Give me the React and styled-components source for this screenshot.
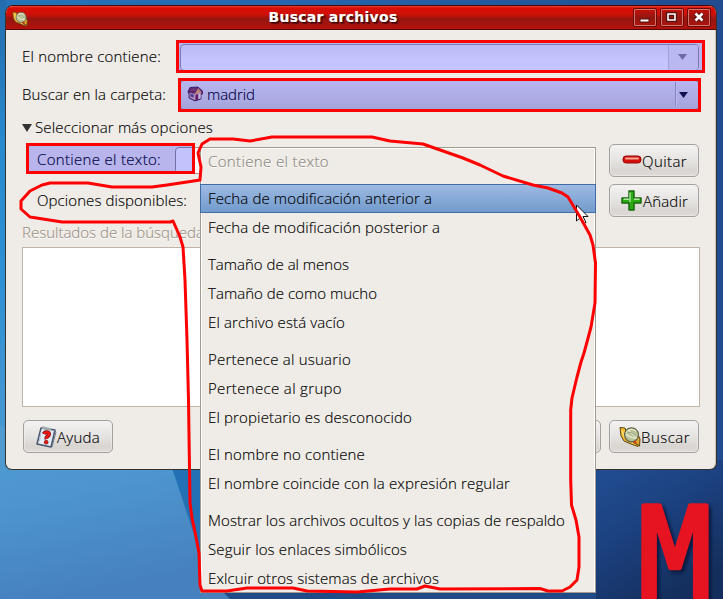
import React, { useLayoutEffect, useRef } from "react";
import styled, { createGlobalStyle } from "styled-components";

const Global = createGlobalStyle`
  * { box-sizing: border-box; }
  body { margin: 0; overflow: hidden; font-family: "Open Sans", "Noto Sans", sans-serif; font-weight: 300; font-size: 15px; color: #000; }
`;

const Desktop = styled.main`
  position: relative;
  width: 723px;
  height: 599px;
  padding: 5px 6px 0 5px;
  overflow: hidden;
  background: #1d4585;
`;

const Wallpaper = styled.svg`
  position: absolute;
  inset: 0;
`;

const LogoLetter = styled.text`
  font: 400 132px "DejaVu Sans Mono", monospace;
  fill: #e51420;
  stroke: #e51420;
  stroke-width: 5px;
  stroke-linejoin: round;
  filter: drop-shadow(3px 3px 2px #0a1a40);
`;

const Window = styled.section`
  position: relative;
  width: 712px;
  height: 465px;
  border: 1px solid #35332f;
  border-top-color: #4a0907;
  border-radius: 8px 8px 7px 7px;
  background: #efece7;
  overflow: hidden;
  box-shadow: inset -1px 0 #c9c2b9;
`;

const TitleBar = styled.header`
  display: grid;
  grid-template-columns: 84px 1fr 84px;
  align-items: center;
  height: 24px;
  background: linear-gradient(#e4433a 0, #d90d05 2px, #d01008 8px, #961610 13px, #ab130c 20px, #b5110b 23px);
  border-bottom: 1px solid #500b08;
`;

const TitleIcon = styled.div`
  height: 18px;
  padding-left: 6px;
  padding-top: 2px;
`;

const Title = styled.h1`
  margin: -2px 0 0;
  justify-self: center;
  font: bold 14px/20px "DejaVu Sans", sans-serif;
  color: #fff;
  text-shadow: 1px 1px 1px #300, 2px 2px 1px #3008;
  padding-right: 56px;
`;

const WindowControls = styled.div`
  display: flex;
  justify-self: end;
  gap: 3px;
  padding-right: 5px;
  margin-top: -1px;
`;

const ControlButton = styled.button`
  display: block;
  width: 24px;
  height: 19px;
  padding: 0;
  border: 1px solid #6b0b07;
  border-radius: 2px;
  background: linear-gradient(#c91009, #921711 50%, #ad130c);
  box-shadow: inset 0 0 0 1px #d4746d;
  svg { display: block; }
`;

const Body = styled.div`
  display: flex;
  flex-direction: column;
  padding: 8px 15px 0 16px;
`;

const Row = styled.div`
  display: flex;
  align-items: center;
  flex: none;
  height: ${(p) => p.$h}px;
  padding-left: ${(p) => p.$indent || 0}px;
`;

const LabelCell = styled.div`
  width: ${(p) => p.$w}px;
  flex: none;
  padding-bottom: 2px;
`;

const Words = styled.span`
  display: inline-block;
  white-space: pre;
  line-height: 20px;
  -webkit-text-stroke: 0.15px currentColor;
`;

const EntryCombo = styled.div`
  display: flex;
  width: 519px;
  height: 27px;
  border: 1px solid #a29f9c;
  border-radius: 4px;
  background: linear-gradient(#f2f2f2, #fff 60%);
  overflow: hidden;
`;

const EntryArrow = styled.div`
  display: grid;
  place-items: center;
  width: 30px;
  padding-right: 2px;
  margin-left: auto;
  border-left: 1px solid #d5d2ce;
  background: #f2f0ed;
`;

const FolderButton = styled.div`
  display: flex;
  align-items: center;
  width: 519px;
  height: 30px;
  padding: 0 0 2px 6px;
  border: 1px solid #aaa7a2;
  border-radius: 4px;
  background: linear-gradient(#efeeec, #d8d5d1);
  gap: 4px;
`;

const FolderArrow = styled.div`
  display: flex;
  align-items: center;
  width: 23px;
  height: 24px;
  padding: 2px 0 0 3px;
  margin-left: auto;
  border-left: 1px solid #b0acab;
  box-shadow: inset 1px 0 #f4f2f0;
`;

const TextEntry = styled.div`
  width: 420px;
  height: 27px;
  border: 1px solid #9a958e;
  border-radius: 4px;
  background: #fdfdfc;
`;

const Button = styled.button`
  display: flex;
  align-items: center;
  justify-content: flex-start;
  width: 90px;
  height: 33px;
  flex: none;
  margin: 0 0 0 ${(p) => p.$push || "0"};
  padding: 0 0 0 ${(p) => p.$pad || 0}px;
  border: 1px solid #a3a19e;
  border-radius: 5px;
  background: linear-gradient(#f4f3f2, #e6e4e2 48%, #d9d6d2 80%, #dedbd7);
  box-shadow: inset 0 0 0 1px #f3f1ef80;
  font: inherit;
  color: inherit;
  svg { flex: none; }
`;

const ButtonText = styled.span`
  display: block;
  padding-top: 1px;
`;

const Muted = styled.div`
  height: 24px;
  padding-top: 1px;
  color: #9b8f83;
  text-shadow: 0 1px #fff;
`;

const ResultList = styled.div`
  height: 160px;
  margin: 2px 0 13px;
  width: 678px;
  border: 1px solid #c0b4a9;
  background: #fff;
`;

const Footer = styled.footer`
  display: flex;
  padding: 0 1px;
`;

const Menu = styled.ul`
  position: absolute;
  left: 200px;
  top: 147px;
  width: 396px;
  height: 446px;
  margin: 0;
  padding: 0;
  list-style: none;
  border: 1px solid #a39a8d;
  box-shadow: inset 1px 1px #fff, inset -1px 0 #fff;
  background: #efece7;
`;

const MenuItem = styled.li`
  height: 29px;
  margin: ${(p) => (p.$gap ? "8px" : "0")} -1px 0;
  padding: 3px 0 0 7px;
  border: 1px solid ${(p) => (p.$selected ? "#416ba5" : "transparent")};
  background: ${(p) => (p.$selected ? "linear-gradient(#9dbae2, #739bcd)" : "none")};
  color: ${(p) => (p.$disabled ? "#8b8781" : "#000")};
  text-shadow: ${(p) => (p.$disabled ? "0 1px #fff" : "none")};
  &:first-child { height: 28px; padding-top: 2px; }
`;

const Overlay = styled.svg`
  position: absolute;
  inset: 0;
  pointer-events: none;
`;

/* Text tracked so that it fills the given width. */
function Label({ w, children }) {
  const ref = useRef(null);
  useLayoutEffect(() => {
    const el = ref.current;
    el.style.letterSpacing = "0px";
    const natural = el.getBoundingClientRect().width;
    el.style.letterSpacing = `${(w - natural) / children.length}px`;
  }, [w, children]);
  return <Words ref={ref}>{children}</Words>;
}

const Triangle = ({ color, width = 9, height = 6 }) => (
  <svg width={width} height={height} viewBox="0 0 9 6" preserveAspectRatio="none">
    <path d="M0 0H9L4.5 6Z" fill={color} />
  </svg>
);

const Lens = ({ size }) => (
  <svg width={size} height={size} viewBox="0 0 22 22">
    <path d="M1 1.5L6 2L8 8L12 15L20 19.5L19 20.5L12 18L5 15L2 10Z" fill="#f3bd2f" stroke="#5e4617" strokeWidth="1" />
    <path d="M18 6L21 13L20.5 20L16 17Z" fill="#dea92b" stroke="#5e4617" strokeWidth="1" />
    <path d="M3 5L6 12L14 17" stroke="#fff09a" fill="none" />
    <circle cx="12.5" cy="8.8" r="7" fill="#b9c296" stroke="#656448" strokeWidth="1.2" />
    <path d="M7 7Q11 1 17 5M7 8Q13 13 18 12M9 4L17 11" fill="none" stroke="#e9edcf" strokeWidth="1.2" />
    <path d="M8 6Q12 5 17 10" fill="none" stroke="#7b8b71" strokeWidth=".7" />
    <path d="M14 16L17 14.5L17.5 18Z" fill="#e53818" />
  </svg>
);

const Home = () => (
  <svg width="16" height="16" viewBox="0 0 16 16">
    <path d="M1 5.5L3 1.5L11 1L15.5 5V8L14 8.5V13L8 15L2 12V8.5Z" fill="#703447" stroke="#3d1a38" strokeWidth=".8" />
    <path d="M2.5 7L8 7.5L11.5 3L14 7.5V12.5L8 14.2L2.5 11.5Z" fill="#e0b9a2" />
    <path d="M1 6L3.2 2L10.8 1.3L7.5 7.5Z" fill="#782f43" />
    <path d="M3 4.5H8.5M4 3H9.5" stroke="#a65b5d" strokeWidth=".7" />
    <path d="M11.3 2L15 7L11.7 6.5L9 9.5L8 7.5Z" fill="#f2ae52" />
    <path d="M8.5 9L11 8V14L8.5 14.5Z" fill="#7f2143" />
    <path d="M3.5 8V10.5L6.5 11.5V8.5Z" fill="#59436f" />
    <path d="M12.5 8V12.5" stroke="#fff0df" strokeWidth="1.2" />
  </svg>
);

const Minus = () => (
  <svg width="20" height="12" viewBox="0 0 20 12">
    <rect x="1" y="2" width="18" height="7" rx="3" fill="#d30e0d" stroke="#970909" />
    <path d="M4 4.6H16" stroke="#f9a691" strokeWidth="2" strokeLinecap="round" />
  </svg>
);

const Plus = () => (
  <svg width="22" height="22" viewBox="0 0 22 22">
    <path d="M8 1H13V8H20V13H13V20H8V13H1V8H8Z" fill="#2cab17" stroke="#17680c" strokeWidth="1.5" strokeLinejoin="round" />
    <path d="M9 12V2.5M2.5 9.3H8M13 9.3H18.5" stroke="#b0e69d" strokeWidth="1.4" fill="none" />
  </svg>
);

const Help = () => (
  <svg width="21" height="22" viewBox="0 0 21 22">
    <path d="M5 2L19 4L15 21L1 18Z" fill="#e6ebf3" stroke="#47566d" strokeWidth="1.5" strokeLinejoin="round" />
    <path d="M18 4L20 6L16 21" fill="none" stroke="#727c8e" />
    <path d="M6 1.5L15 3.5" stroke="#a3a9ae" strokeWidth="2.5" />
    <path d="M5 6L3.5 15M6 6.5H8" stroke="#a9b9ce" />
    <path d="M8 8Q9 5.5 12 6.5Q14 7.5 12 10Q10 11.5 10.5 13" fill="none" stroke="#731015" strokeWidth="4" />
    <path d="M8 8Q9 5.5 12 6.5Q14 7.5 12 10Q10 11.5 10.5 13" fill="none" stroke="#ef1612" strokeWidth="2.6" />
    <circle cx="10.2" cy="16.2" r="1.9" fill="#ef1612" stroke="#731015" strokeWidth=".7" />
  </svg>
);

const MENU = [
  { text: "Contiene el texto", w: 121, disabled: true },
  { text: "Fecha de modificación anterior a", w: 224, gap: true, selected: true },
  { text: "Fecha de modificación posterior a", w: 232 },
  { text: "Tamaño de al menos", w: 141, gap: true },
  { text: "Tamaño de como mucho", w: 169 },
  { text: "El archivo está vacío", w: 137 },
  { text: "Pertenece al usuario", w: 143, gap: true },
  { text: "Pertenece al grupo", w: 134 },
  { text: "El propietario es desconocido", w: 204 },
  { text: "El nombre no contiene", w: 157, gap: true },
  { text: "El nombre coincide con la expresión regular", w: 302 },
  { text: "Mostrar los archivos ocultos y las copias de respaldo", w: 357, gap: true },
  { text: "Seguir los enlaces simbólicos", w: 199 },
  { text: "Exlcuir otros sistemas de archivos", w: 231 },
];

const Background = () => (
  <Wallpaper width="723" height="599">
    <defs>
      <linearGradient id="sky" x1="0" x2="1"><stop offset="0" stopColor="#2474b8" /><stop offset=".4" stopColor="#2666ae" /><stop offset="1" stopColor="#214b8e" /></linearGradient>
      <linearGradient id="side" x1="0" x2="0" y1="0" y2="1"><stop offset="0" stopColor="#246cad" /><stop offset=".3" stopColor="#2889ce" /><stop offset=".6" stopColor="#2f91d5" /><stop offset="1" stopColor="#4c98d0" /></linearGradient>
      <linearGradient id="glow" x1="0" x2=".25" y1="0" y2="1"><stop offset="0" stopColor="#509bd2" /><stop offset=".45" stopColor="#4d95ce" /><stop offset="1" stopColor="#4681bd" /></linearGradient>
      <linearGradient id="night" x1="0" x2=".6" y1="0" y2="1"><stop offset="0" stopColor="#225094" /><stop offset=".5" stopColor="#1c4180" /><stop offset="1" stopColor="#142f5d" /></linearGradient>
    </defs>
    <rect width="723" height="599" fill="url(#sky)" />
    <rect width="6" height="470" fill="url(#side)" />
    <rect x="590" y="460" width="133" height="139" fill="url(#night)" />
    <rect x="160" y="460" width="50" height="139" fill="#2370b5" />
    <path d="M0 425Q30 450 171 465Q186 510 200 553L214 599H0Z" fill="url(#glow)" />
    <path d="M200 590H596V599H222Z" fill="#214b87" />
    <path d="M200 592H223L230 599H200Z" fill="#4b7fb9" />
    <LogoLetter transform="translate(638.4 602) scale(.92 1)">M</LogoLetter>
  </Wallpaper>
);

const LASSO = "200,180 187,182 167,185 152,187 112,187 88,183 50,183 42,185 30,191 21,201 21,209 30,217 43,219 62,222 170,222 173,221 177,230 180,237 183,247 185,280 187,340 188.5,400 190,503 192,518 196,537 199,553 200,585 202,591 227,591 247,588 293,588 307,591 357,592 390,589 417,589 425,586 440,589 540,588.5 548,591 562,591 570,587 577,580 579,567 579,537 576,520 571.5,505 570.7,480 570.7,410 572,398 577,377 581,362 584,353 587,342 591,327 595,303 595.5,263 593,245 590,235 580,217 568,197 562,193 548,188 533,185 503,176 480,165 463,158 423,144 390,141 372,137 272,137 250,141 233,139 210,139 202,144 198,153 201,167 200,180";

export default function App() {
  return (
    <>
      <Global />
      <Desktop>
        <Background />
        <Window>
          <TitleBar>
            <TitleIcon><Lens size={16} /></TitleIcon>
            <Title><Label w={129}>Buscar archivos</Label></Title>
            <WindowControls>
              <ControlButton aria-label="Minimizar"><svg width="22" height="17"><path d="M6 10H15V13H6Z" fill="#fff" stroke="#56100d" /></svg></ControlButton>
              <ControlButton aria-label="Maximizar"><svg width="22" height="17"><rect x="7" y="5" width="7" height="6" fill="none" stroke="#56100d" strokeWidth="4" /><path d="M7 11V5H14V11Z" fill="none" stroke="#fff" strokeWidth="1.6" /></svg></ControlButton>
              <ControlButton aria-label="Cerrar"><svg width="22" height="17"><path d="M7.5 4.5L14.5 11.5M14.5 4.5L7.5 11.5" stroke="#56100d" strokeWidth="4.5" /><path d="M7.5 4.5L14.5 11.5M14.5 4.5L7.5 11.5" stroke="#fff" strokeWidth="2.5" /></svg></ControlButton>
            </WindowControls>
          </TitleBar>
          <Body>
            <Row $h={38}>
              <LabelCell $w={158}><Label w={139}>El nombre contiene:</Label></LabelCell>
              <EntryCombo><EntryArrow><Triangle color="#8f8990" /></EntryArrow></EntryCombo>
            </Row>
            <Row $h={38}>
              <LabelCell $w={158}><Label w={144}>Buscar en la carpeta:</Label></LabelCell>
              <FolderButton>
                <Home />
                <Label w={48}>madrid</Label>
                <FolderArrow><Triangle color="#17171f" /></FolderArrow>
              </FolderButton>
            </Row>
            <Row $h={26}>
              <LabelCell $w={13}><Triangle color="#333" width={10} height={8} /></LabelCell>
              <Label w={178}>Seleccionar más opciones</Label>
            </Row>
            <Row $h={40} $indent={15}>
              <LabelCell $w={138}><Label w={124}>Contiene el texto:</Label></LabelCell>
              <TextEntry />
              <Button $push="14px" $pad={12}><Minus /><ButtonText><Label w={45}>Quitar</Label></ButtonText></Button>
            </Row>
            <Row $h={41} $indent={15}>
              <LabelCell $w={138}><Label w={150}>Opciones disponibles:</Label></LabelCell>
              <Button $push="434px" $pad={11}><Plus /><ButtonText><Label w={45}>Añadir</Label></ButtonText></Button>
            </Row>
            <Muted><Label w={182}>Resultados de la búsqueda</Label></Muted>
            <ResultList />
            <Footer>
              <Button $pad={12}><Help /><ButtonText><Label w={43}>Ayuda</Label></ButtonText></Button>
              <Button $push="398px" aria-label="Cerrar" />
              <Button $push="8px" $pad={9}><Lens size={22} /><ButtonText><Label w={49}>Buscar</Label></ButtonText></Button>
            </Footer>
          </Body>
        </Window>
        <Menu>
          {MENU.map((m) => (
            <MenuItem key={m.text} $gap={m.gap} $selected={m.selected} $disabled={m.disabled}>
              <Label w={m.w}>{m.text}</Label>
            </MenuItem>
          ))}
        </Menu>
        <Overlay width="723" height="599">
          <path d="M576.5 205V221L580 218L583 224L586 222.5L583 216.5H588Z" fill="#fff" stroke="#111" />
          <g fill="#0000ff" fillOpacity=".23" stroke="#f00" strokeWidth="3">
            <rect x="177.5" y="41.5" width="526" height="30" />
            <rect x="179.5" y="79.5" width="520" height="31" />
            <rect x="27.5" y="144.5" width="166" height="28" />
          </g>
          <polyline points={LASSO} fill="none" stroke="#f00" strokeWidth="3" strokeLinejoin="round" strokeLinecap="round" />
        </Overlay>
      </Desktop>
    </>
  );
}
